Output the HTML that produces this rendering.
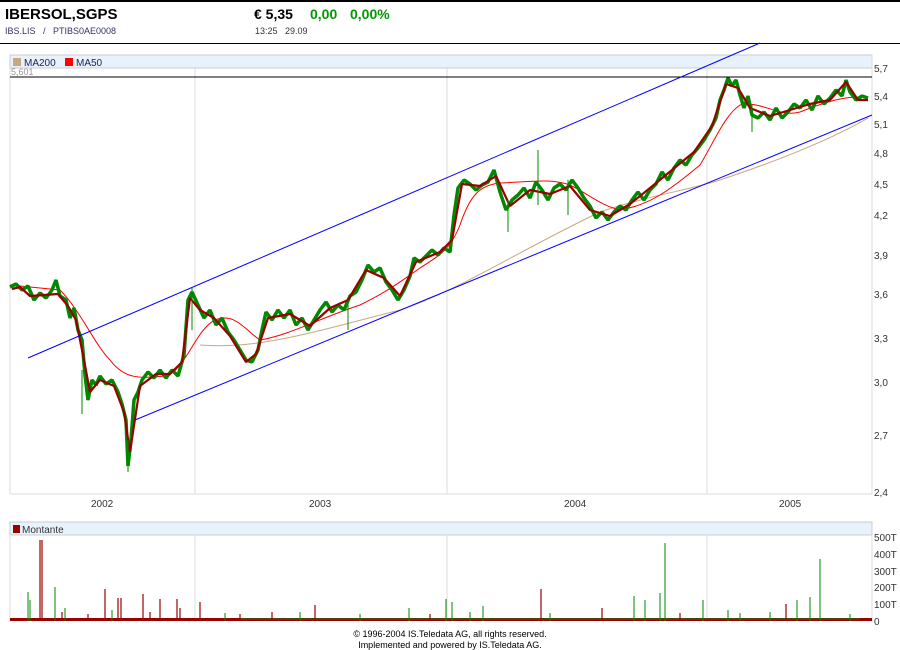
<!DOCTYPE html>
<html><head><meta charset="utf-8">
<style>
body{margin:0;width:900px;height:650px;background:#fff;font-family:"Liberation Sans",Arial,sans-serif;overflow:hidden;position:relative}
.t{position:absolute;white-space:nowrap}
</style></head><body>
<div style="position:absolute;left:0;top:0;width:900px;height:2px;background:#000"></div>
<div class="t" style="left:5px;top:6px;font-size:15px;font-weight:bold;color:#000">IBERSOL,SGPS</div>
<div class="t" style="left:5px;top:26px;font-size:9px;color:#336">IBS.LIS &nbsp; / &nbsp; PTIBS0AE0008</div>
<div class="t" style="left:254px;top:6px;font-size:14px;font-weight:bold;color:#000">€ 5,35</div>
<div class="t" style="left:310px;top:6px;font-size:14px;font-weight:bold;color:#090">0,00</div>
<div class="t" style="left:350px;top:6px;font-size:14px;font-weight:bold;color:#090">0,00%</div>
<div class="t" style="left:255px;top:26px;font-size:9px;color:#333">13:25 &nbsp; 29.09</div>
<div style="position:absolute;left:0;top:43px;width:900px;height:1px;background:#000"></div>
<svg width="900" height="650" style="position:absolute;left:0;top:0" font-family="Liberation Sans, Arial, sans-serif">
<rect x="10" y="55" width="862" height="13" fill="#e8f2fc" stroke="#ccc"/>
<rect x="13" y="58" width="8" height="8" fill="#c8a882"/>
<text x="24" y="66" font-size="10" fill="#225">MA200</text>
<rect x="65" y="58" width="8" height="8" fill="#f00"/>
<text x="76" y="66" font-size="10" fill="#225">MA50</text>
<text x="11" y="75" font-size="9" fill="#999">5,601</text>
<line x1="10" y1="68" x2="10" y2="494" stroke="#ddd"/>
<line x1="195" y1="68" x2="195" y2="494" stroke="#ddd"/>
<line x1="447" y1="68" x2="447" y2="494" stroke="#ddd"/>
<line x1="707" y1="68" x2="707" y2="494" stroke="#ddd"/>
<line x1="872" y1="55" x2="872" y2="494" stroke="#ddd"/>
<line x1="10" y1="494" x2="872" y2="494" stroke="#ddd"/>
<g font-size="10" fill="#333">
<text x="874" y="72">5,7</text><text x="874" y="100">5,4</text><text x="874" y="128">5,1</text><text x="874" y="157">4,8</text><text x="874" y="188">4,5</text><text x="874" y="219">4,2</text><text x="874" y="259">3,9</text><text x="874" y="298">3,6</text><text x="874" y="342">3,3</text><text x="874" y="386">3,0</text><text x="874" y="439">2,7</text><text x="874" y="496">2,4</text>
<text x="91" y="507">2002</text><text x="309" y="507">2003</text><text x="564" y="507">2004</text><text x="779" y="507">2005</text>
</g>
<path d="M200,345 C260,350 320,330 400,310 C460,290 520,250 600,212 C650,195 690,190 720,180 C780,160 830,140 868,118" fill="none" stroke="#c8a882"/>
<path d="M10,285 L60,290 C80,310 95,345 110,360 C125,380 140,378 165,376 C185,372 195,330 215,320 C235,312 245,330 260,340 C290,335 320,318 360,305 C390,290 400,282 420,268 C440,255 450,250 460,225 C470,195 480,185 500,183 C530,182 550,178 570,185 C590,195 600,205 620,210 C650,205 670,190 700,165 C715,140 725,115 740,105 C760,100 780,118 800,112 C830,100 850,95 868,98" fill="none" stroke="#f00"/>
<g fill="none" stroke-linejoin="bevel">
<path stroke="#080" stroke-width="3.5" d="M10,287 L16,284 L22,290 L28,286 L34,300 L40,293 L46,298 L52,290 L56,280 L60,296 L66,300 L70,318 L74,308 L78,330 L82,340 L85,375 L88,400 L92,380 L96,385 L100,376 L106,384 L112,380 L118,392 L122,404 L126,420 L128,466 L131,440 L134,400 L138,392 L142,380 L148,372 L154,378 L160,370 L166,378 L172,370 L178,376 L184,355 L188,300 L192,292 L198,305 L204,318 L210,310 L216,325 L222,318 L228,332 L234,340 L240,350 L246,360 L252,362 L258,350 L262,330 L266,312 L272,320 L278,310 L284,318 L290,310 L296,325 L302,318 L308,330 L314,320 L320,310 L326,302 L332,312 L338,305 L344,310 L350,296 L356,292 L362,280 L368,265 L374,272 L380,268 L386,282 L392,290 L398,300 L404,290 L410,276 L414,258 L420,262 L426,256 L432,250 L438,255 L444,248 L450,252 L454,215 L458,188 L464,180 L470,184 L476,190 L482,185 L488,182 L494,170 L500,192 L506,210 L512,200 L518,195 L524,188 L530,198 L536,182 L542,190 L548,200 L554,188 L560,184 L566,190 L572,180 L578,188 L584,198 L590,206 L596,218 L602,212 L608,220 L614,212 L620,206 L626,210 L632,200 L638,192 L644,200 L650,190 L656,184 L662,172 L668,180 L674,168 L680,160 L686,165 L692,155 L698,148 L704,140 L710,130 L716,118 L720,100 L724,90 L728,78 L732,86 L736,80 L740,95 L744,108 L748,96 L752,115 L758,118 L764,112 L770,120 L776,108 L782,118 L788,112 L794,104 L800,108 L806,100 L812,110 L818,96 L824,104 L830,98 L836,90 L842,96 L846,80 L850,92 L856,100 L862,96 L868,98"/>
<path stroke="#900" stroke-width="2.2" d="M12,289 L20,287 L30,296 L44,295 L58,294 L68,306 L76,320 L84,360 L90,392 L100,380 L114,386 L124,412 L130,452 L140,386 L156,374 L170,374 L182,362 L190,298 L200,310 L214,318 L230,336 L246,362 L256,354 L268,318 L290,314 L310,326 L330,308 L348,300 L366,270 L384,278 L400,296 L416,262 L440,252 L452,240 L462,184 L480,186 L496,176 L510,206 L530,190 L550,194 L570,186 L590,210 L610,216 L630,204 L650,188 L672,170 L694,152 L712,126 L726,84 L738,88 L750,108 L770,116 L790,110 L810,104 L830,100 L846,82 L858,100 L868,100"/>
</g>
<g stroke="#080">
<line x1="82" y1="370" x2="82" y2="414"/><line x1="128" y1="440" x2="128" y2="472"/><line x1="538" y1="150" x2="538" y2="205"/><line x1="508" y1="200" x2="508" y2="232"/><line x1="192" y1="288" x2="192" y2="330"/>
<line x1="348" y1="300" x2="348" y2="330"/><line x1="568" y1="180" x2="568" y2="215"/><line x1="752" y1="105" x2="752" y2="132"/>
</g>
<rect x="10" y="522" width="862" height="13" fill="#e8f2fc" stroke="#ccc"/>
<rect x="13" y="525" width="7" height="8" fill="#900"/>
<text x="22" y="533" font-size="10" fill="#333">Montante</text>
<line x1="10" y1="535" x2="10" y2="622" stroke="#ddd"/>
<line x1="195" y1="535" x2="195" y2="622" stroke="#ddd"/>
<line x1="447" y1="535" x2="447" y2="622" stroke="#ddd"/>
<line x1="707" y1="535" x2="707" y2="622" stroke="#ddd"/>
<line x1="872" y1="535" x2="872" y2="622" stroke="#ddd"/>
<g font-size="10" fill="#333">
<text x="874" y="541">500T</text><text x="874" y="558">400T</text><text x="874" y="575">300T</text><text x="874" y="591">200T</text><text x="874" y="608">100T</text><text x="874" y="625">0</text>
</g>
<rect x="10" y="618" width="862" height="3" fill="#900"/>
<rect x="240" y="618" width="620" height="2" fill="#080" opacity="0.5"/>
<g stroke="#900" stroke-width="1.2">
<line x1="40" y1="540" x2="40" y2="621"/><line x1="42" y1="540" x2="42" y2="621"/><line x1="105" y1="589" x2="105" y2="621"/><line x1="118" y1="598" x2="118" y2="621"/><line x1="121" y1="598" x2="121" y2="621"/><line x1="143" y1="594" x2="143" y2="621"/><line x1="160" y1="599" x2="160" y2="621"/><line x1="177" y1="599" x2="177" y2="621"/><line x1="200" y1="602" x2="200" y2="621"/><line x1="541" y1="589" x2="541" y2="621"/><line x1="315" y1="605" x2="315" y2="621"/><line x1="180" y1="608" x2="180" y2="621"/><line x1="602" y1="608" x2="602" y2="621"/><line x1="786" y1="604" x2="786" y2="621"/>
<line x1="62" y1="612" x2="62" y2="621"/><line x1="88" y1="614" x2="88" y2="621"/><line x1="150" y1="612" x2="150" y2="621"/><line x1="240" y1="614" x2="240" y2="621"/><line x1="272" y1="612" x2="272" y2="621"/><line x1="430" y1="614" x2="430" y2="621"/><line x1="680" y1="613" x2="680" y2="621"/>
</g>
<g stroke="#080" stroke-width="1">
<line x1="28" y1="592" x2="28" y2="621"/><line x1="55" y1="587" x2="55" y2="621"/><line x1="30" y1="600" x2="30" y2="621"/><line x1="65" y1="608" x2="65" y2="621"/><line x1="446" y1="599" x2="446" y2="621"/><line x1="452" y1="602" x2="452" y2="621"/><line x1="409" y1="608" x2="409" y2="621"/><line x1="483" y1="606" x2="483" y2="621"/><line x1="634" y1="596" x2="634" y2="621"/><line x1="645" y1="600" x2="645" y2="621"/><line x1="665" y1="543" x2="665" y2="621"/><line x1="660" y1="593" x2="660" y2="621"/><line x1="703" y1="600" x2="703" y2="621"/><line x1="797" y1="600" x2="797" y2="621"/><line x1="810" y1="597" x2="810" y2="621"/><line x1="820" y1="559" x2="820" y2="621"/><line x1="728" y1="610" x2="728" y2="621"/><line x1="300" y1="612" x2="300" y2="621"/>
<line x1="112" y1="610" x2="112" y2="621"/><line x1="225" y1="613" x2="225" y2="621"/><line x1="360" y1="614" x2="360" y2="621"/><line x1="470" y1="612" x2="470" y2="621"/><line x1="550" y1="613" x2="550" y2="621"/><line x1="740" y1="613" x2="740" y2="621"/><line x1="770" y1="612" x2="770" y2="621"/><line x1="850" y1="614" x2="850" y2="621"/>
</g>
<line x1="10" y1="77" x2="872" y2="77" stroke="#000"/>
<line x1="28" y1="358" x2="760" y2="43" stroke="#00f"/>
<line x1="135" y1="420" x2="872" y2="115" stroke="#00f"/>
<text x="450" y="637" font-size="9" fill="#000" text-anchor="middle">© 1996-2004 IS.Teledata AG, all rights reserved.</text>
<text x="450" y="648" font-size="9" fill="#000" text-anchor="middle">Implemented and powered by IS.Teledata AG.</text>
</svg>
</body></html>
